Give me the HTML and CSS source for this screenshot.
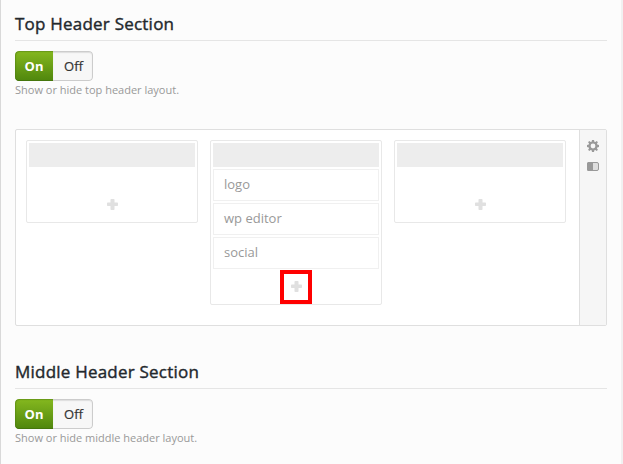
FILE: index.html
```html
<!DOCTYPE html>
<html lang="en">
<head>
<meta charset="utf-8">
<title>Header layout</title>
<link rel="stylesheet" href="styles.css">
</head>
<body>
<svg width="0" height="0" class="defs">
  <symbol id="plus" viewBox="0 0 11 11"><path d="M4.200 0h2.600q.7 0 .7.700v2.800h2.800q.7 0 .7.700v2.100q0 .7-.7.700H7.500v3.300q0 .7-.7.700H4.200q-.7 0-.7-.7V7H.7Q0 7 0 6.300V4.200q0-.7.7-.7h2.800V.7q0-.7.7-.7z"/></symbol>
</svg>
<main class="page">
  <section class="section">
    <h2 class="title">Top Header Section</h2>
    <div class="toggle"><span class="on">On</span><span class="off">Off</span></div>
    <p class="hint">Show or hide top header layout.</p>
    <div class="builder">
      <div class="columns">
        <div class="column">
          <div class="bar"></div>
          <div class="add"><svg><use href="#plus"/></svg></div>
        </div>
        <div class="column filled">
          <div class="bar"></div>
          <div class="item">logo</div>
          <div class="item">wp editor</div>
          <div class="item">social</div>
          <div class="add marked"><svg><use href="#plus"/></svg></div>
        </div>
        <div class="column">
          <div class="bar"></div>
          <div class="add"><svg><use href="#plus"/></svg></div>
        </div>
      </div>
      <aside class="tools">
        <svg class="gear" viewBox="0 0 12 12"><path fill-rule="evenodd" d="M5 0h2l.4 1.700.9.400L9.800 1.100 10.900 2.200 9.900 3.700l.4.900L12 5v2l-1.700.4-.4.9 1 1.500-1.100 1.100-1.500-1-.9.4L7 12H5l-.4-1.700-.9-.4-1.500 1L1.100 9.800l1-1.500-.4-.9L0 7V5l1.700-.4.4-.9-1-1.500L2.200 1.100l1.500 1 .9-.4zM6 3.600a2.400 2.400 0 1 0 0 4.800a2.400 2.400 0 1 0 0-4.800z"/></svg>
        <svg class="switch" viewBox="0 0 12 9"><rect x=".5" y=".5" width="11" height="8" rx="1.500" fill="#dedede" stroke="#999"/><path d="M1.500 0H6v9H1.500Q0 9 0 7.500v-6Q0 0 1.500 0z" fill="#999"/></svg>
      </aside>
    </div>
  </section>
  <section class="section">
    <h2 class="title">Middle Header Section</h2>
    <div class="toggle"><span class="on">On</span><span class="off">Off</span></div>
    <p class="hint">Show or hide middle header layout.</p>
  </section>
</main>
</body>
</html>
```
FILE: styles.css
```css
* { box-sizing: border-box; }
body {
  margin: 0;
  height: 464px;
  overflow: hidden;
  background: #f1f1f1;
  font-family: "Open Sans", "Noto Sans", sans-serif;
}
.defs { display: none; }
.page {
  width: 621px;
  height: 464px;
  padding: 8px 13px 0 14px;
  border-left: 1px solid #d9d9d9;
  background: #fcfcfc;
}
.page > .section { width: 592px; }
.section + .section { margin-top: 30px; }
.title {
  height: 33px;
  margin: 0 0 10px;
  border-bottom: 1px solid #e5e5e5;
  color: #23282d;
  font-size: 17px;
  font-weight: 400;
  letter-spacing: .22px;
  line-height: 32px;
  -webkit-text-stroke: .4px #23282d;
}
.toggle {
  display: flex;
  width: 78px;
  height: 30px;
  border-radius: 4px;
  overflow: hidden;
  font-size: 13px;
  line-height: 30px;
  text-align: center;
}
.on {
  width: 38px;
  background: linear-gradient(#85b81f, #4f860d);
  box-shadow: inset 1px 1px 1px #4c7a1080, inset 0 -1px #45760c;
  border-radius: 4px 0 0 4px;
  color: #fff;
  font-weight: 700;
}
.off {
  width: 40px;
  padding-left: 2px;
  border: 1px solid #ccc;
  border-left: 0;
  border-radius: 0 4px 4px 0;
  background: #f7f7f7;
  box-shadow: inset 0 1px 1px #ddd;
  color: #333;
  line-height: 28px;
  -webkit-text-stroke: .2px #333;
}
.hint {
  margin: 0;
  height: 18px;
  color: #999;
  font-size: 11px;
  line-height: 18px;
}
.builder {
  display: flex;
  height: 197px;
  margin-top: 30px;
  border: 1px solid #dfdfdf;
  border-radius: 2px;
  background: #fff;
}
.columns {
  display: flex;
  flex: 1;
  align-items: flex-start;
  gap: 12px;
  padding: 10px 0 0 10px;
}
.column {
  width: 172px;
  padding: 2px;
  border: 1px solid #e8e8e8;
  border-radius: 2px;
}
.bar { height: 24px; background: #ededed; }
.item {
  height: 32px;
  margin-top: 2px;
  padding-left: 10px;
  border: 1px solid #f0f0f0;
  color: #999;
  font-size: 13px;
  line-height: 29px;
}
.add {
  display: flex;
  justify-content: center;
  width: 32px;
  height: 34px;
  margin: 21px auto -2px;
  padding: 11px 0 0 1px;
}
.filled .add { margin-top: 1px; }
.marked { padding-top: 7px; border: 4px solid red; }
.add svg { width: 11px; height: 11px; fill: #e0e0e0; }
.tools {
  display: flex;
  flex-direction: column;
  align-items: center;
  gap: 10px;
  width: 27px;
  padding-top: 10px;
  border-left: 1px solid #dfdfdf;
  background: #f6f6f6;
}
.gear { width: 12px; height: 12px; fill: #999; }
.switch { width: 12px; height: 9px; }
```
